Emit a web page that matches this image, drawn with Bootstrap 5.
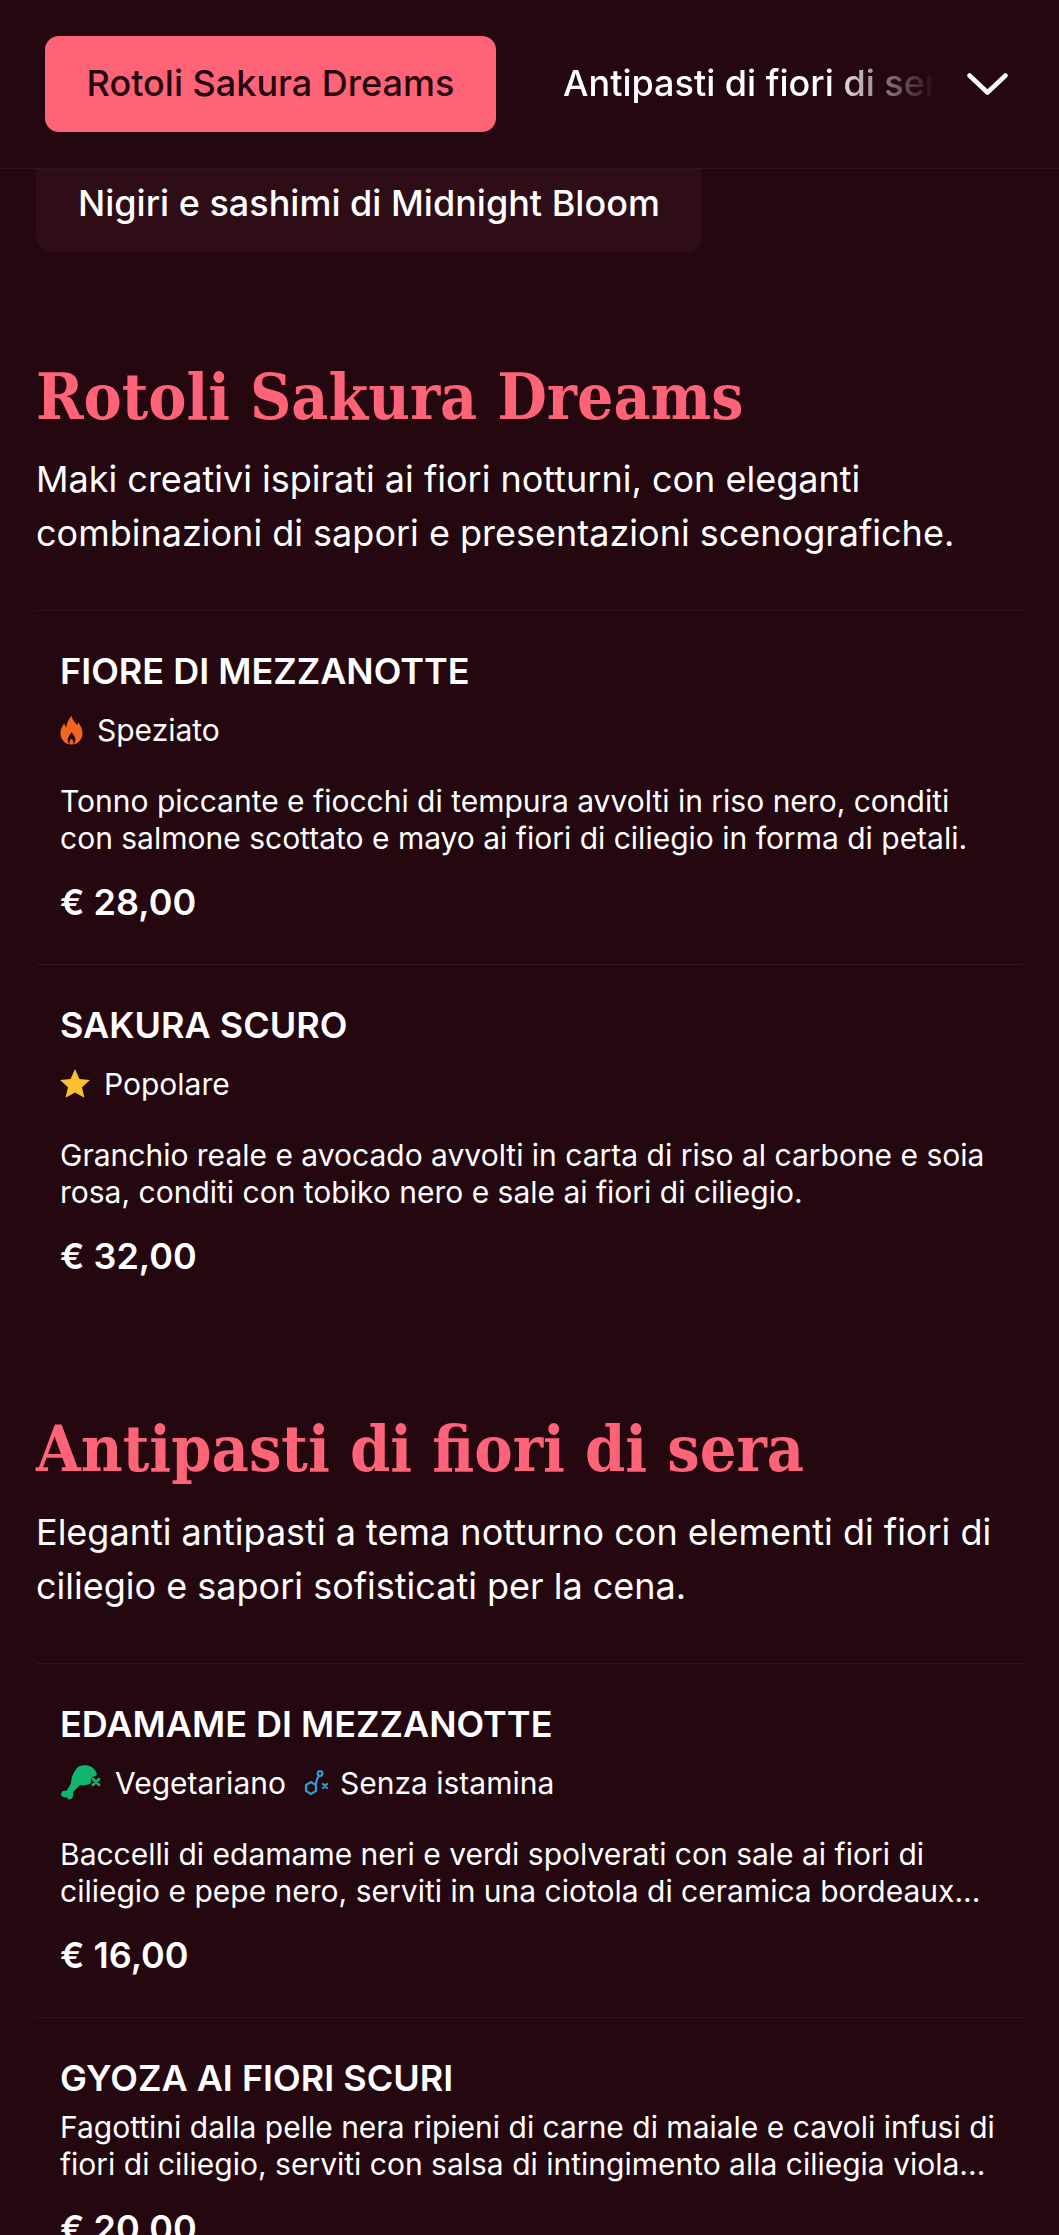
<!DOCTYPE html>
<html lang="it">
<head>
<meta charset="utf-8">
<title>Menu</title>
<link href="https://cdn.jsdelivr.net/npm/bootstrap@5.3.0/dist/css/bootstrap.min.css" rel="stylesheet">
<style>
html,body{height:2235px;overflow:hidden}
body{background:#24070f;color:#fff;font-family:"Inter","Liberation Sans",sans-serif}
.topbar{height:169px;background:#24070f;border-bottom:1px solid #36111d;position:relative;z-index:2;padding:36px 51px 0 45px}
.tab-on{width:451px;height:96px;background:#ff6378;color:#24070f;border-radius:14px;font-size:36px;font-weight:500;white-space:nowrap;padding-bottom:2px}
.tab-rest{margin-left:67px;width:373px;font-size:36px;font-weight:500;white-space:nowrap;overflow:hidden;height:96px;line-height:94px;-webkit-mask-image:linear-gradient(90deg,#000 71%,transparent 100%);mask-image:linear-gradient(90deg,#000 71%,transparent 100%)}
.chev{width:41px;height:22px;margin-top:37px;margin-left:auto}
.tab-under{margin:-13px 0 0 36px;width:665px;height:96px;background:#2f0d17;border-radius:14px;padding-left:42px;font-size:36px;font-weight:500;line-height:94px;white-space:nowrap}
.sect{padding:0 36px}
.sec-a{margin-top:105px}
.sec-b{margin-top:91px}
.sect-h{font-family:"DejaVu Serif Condensed","DejaVu Serif","Liberation Serif",serif;font-weight:700;color:#ff6378;font-size:63.7px;line-height:80px;margin:0 0 15px;white-space:nowrap}
.sec-b .sect-h{margin-bottom:16px;font-size:64.1px}
.sect-d{font-size:36px;line-height:54px;margin:0 0 50px}
.dish{border-top:1px solid #36111d;padding:38px 24px 0}
.dish-t{font-size:36px;font-weight:600;line-height:44px;margin:0;text-transform:uppercase}
.dish-d{font-size:30px;line-height:36.5px;margin:0}
.dish-p{font-size:36px;font-weight:600;line-height:44px;margin:24px 0 0}
.tagrow{font-size:30px;line-height:36px;height:36px;margin:19px 0 35px}
.tag-i{margin-right:14px;flex:none}
.tag-k{margin-right:13px;flex:none}
.tag-j{margin:0 12px 0 18px;flex:none}
.one{height:354px}
.last .dish-d{margin-top:9px}
</style>
</head>
<body>
<div class="topbar d-flex align-items-start">
<div class="tab-on d-flex align-items-center justify-content-center">Rotoli Sakura Dreams</div>
<div class="tab-rest">Antipasti di fiori di sera</div>
<svg class="chev" viewBox="0 0 41 22" fill="none" stroke="#fff" stroke-width="4.5" stroke-linecap="round" stroke-linejoin="round"><path d="M2.500 2.500 20.500 19.500 38.500 2.500"/></svg>
</div>
<div class="tab-under">Nigiri e sashimi di Midnight Bloom</div>

<section class="sect sec-a">
<h2 class="sect-h">Rotoli Sakura Dreams</h2>
<p class="sect-d">Maki creativi ispirati ai fiori notturni, con eleganti combinazioni di sapori e presentazioni scenografiche.</p>
<div class="dish one">
<h3 class="dish-t">Fiore di mezzanotte</h3>
<div class="tagrow d-flex align-items-center"><svg class="tag-i" width="23" height="30" viewBox="0 0 24 30"><path fill="#f4651f" d="M12 0c1 5 4 7 6 10 .6-1 .9-2 1-3 3 4 4.500 8 4.500 11 0 7-5 12-11.500 12S.5 25 .5 18c0-4 2-7 4-10 .3 2 .8 3 2 4C7 8 9 4 12 0z"/><path fill="#24070f" d="M12 17c2 3 4 5 4 8 0 2-1 4-2 5 .5-2-.5-5-2-6-1.500 1-2.500 4-2 6-1-1-2-3-2-5 0-3 3-5 4-8z"/></svg><span class="tag-l">Speziato</span></div>
<p class="dish-d">Tonno piccante e fiocchi di tempura avvolti in riso nero, conditi con salmone scottato e mayo ai fiori di ciliegio in forma di petali.</p>
<p class="dish-p">€ 28,00</p>
</div>
<div class="dish one">
<h3 class="dish-t">Sakura scuro</h3>
<div class="tagrow d-flex align-items-center"><svg class="tag-i" width="30" height="30" viewBox="0.500 0.500 23 23"><path fill="#fbc02d" d="M12 .5l3.400 7.600 8.100.9-6.100 5.500 1.800 8.100L12 18.500l-7.200 4.100 1.800-8.100L.5 9l8.100-.9z"/></svg><span class="tag-l">Popolare</span></div>
<p class="dish-d">Granchio reale e avocado avvolti in carta di riso al carbone e soia rosa, conditi con tobiko nero e sale ai fiori di ciliegio.</p>
<p class="dish-p">€ 32,00</p>
</div>
</section>

<section class="sect sec-b">
<h2 class="sect-h">Antipasti di fiori di sera</h2>
<p class="sect-d">Eleganti antipasti a tema notturno con elementi di fiori di ciliegio e sapori sofisticati per la cena.</p>
<div class="dish one">
<h3 class="dish-t">Edamame di mezzanotte</h3>
<div class="tagrow d-flex align-items-center">
<svg class="tag-k" width="42" height="36" viewBox="0 0 42 36"><path fill="#10b56f" d="M20 1c7-2 14 1 16 6 1 2 1 3 0 4-3 0-6 3-5 7-3 2-8 3-11 2-3 3-5 5-7 7 1 3 0 6-2 7-2 1-4 0-4-2-2 1-5 0-6-2 0-3 2-5 5-4 2-2 3-4 5-8 0-6 4-15 9-17z"/><path stroke="#10b56f" stroke-width="2.500" stroke-linecap="round" d="M33 14l6 6M39 14l-6 6"/></svg>
<span class="tag-l">Vegetariano</span>
<svg class="tag-j" width="24" height="26" viewBox="0 0 24 26" fill="none" stroke="#2a9fd6" stroke-width="2.200"><path d="M2 15l5-3 5 3v6l-5 3-5-3z"/><path d="M12 14l1-5 2-3"/><circle cx="16" cy="3.500" r="2.400"/><path stroke-linecap="round" d="M19 14l4 4M23 14l-4 4"/></svg>
<span class="tag-l">Senza istamina</span>
</div>
<p class="dish-d">Baccelli di edamame neri e verdi spolverati con sale ai fiori di ciliegio e pepe nero, serviti in una ciotola di ceramica bordeaux...</p>
<p class="dish-p">€ 16,00</p>
</div>
<div class="dish last">
<h3 class="dish-t">Gyoza ai fiori scuri</h3>
<p class="dish-d">Fagottini dalla pelle nera ripieni di carne di maiale e cavoli infusi di fiori di ciliegio, serviti con salsa di intingimento alla ciliegia viola...</p>
<p class="dish-p">€ 20,00</p>
</div>
</section>
</body>
</html>
